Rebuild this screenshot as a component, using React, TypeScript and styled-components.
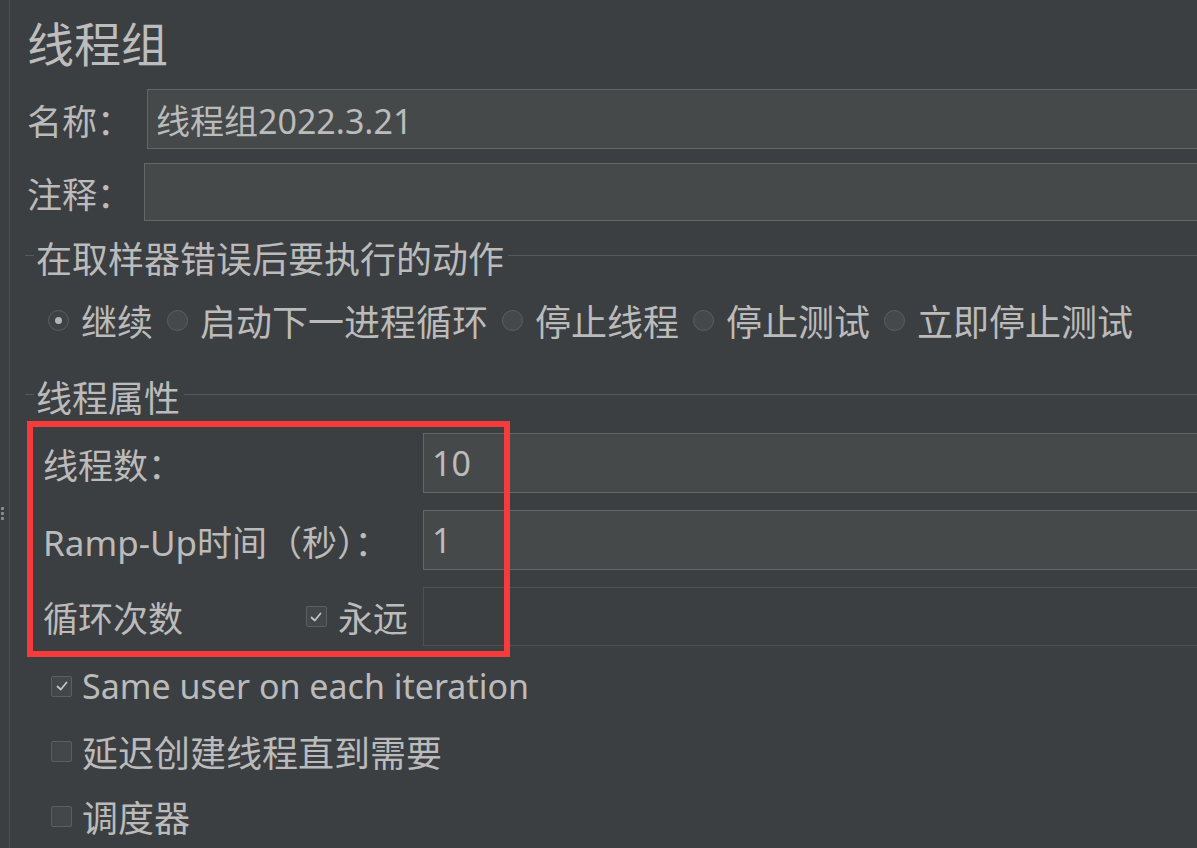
import React from "react";
import styled, { createGlobalStyle } from "styled-components";

const GlobalStyle = createGlobalStyle`
  html, body {
    margin: 0;
    padding: 0;
    background: #3c3f41;
    overflow: hidden;
  }
  body {
    font-family: "Noto Sans", "Noto Sans CJK SC", sans-serif;
    color: #bbbbbb;
  }
`;

const Root = styled.div`
  display: flex;
  width: 100vw;
  height: 100vh;
  overflow: hidden;
`;

const Splitter = styled.div`
  width: 9px;
  flex: none;
  display: flex;
  flex-direction: column;
  align-items: flex-start;
  justify-content: center;
  gap: 2px;
  padding-top: 178px;
  box-sizing: border-box;
`;

const Dot = styled.span`
  width: 3px;
  height: 3px;
  margin-left: 1px;
  border-radius: 1px;
  background: #8c8e90;
`;

const Panel = styled.div`
  flex: 1;
  border-left: 1px solid #4d5052;
  padding-left: 17px;
  display: flex;
  flex-direction: column;
  min-width: 0;
`;

const Title = styled.div`
  height: 89px;
  line-height: 89px;
  font-size: 47px;
  color: #bdbdbd;
`;

const FieldRow = styled.div<{ $gap?: number }>`
  display: flex;
  align-items: center;
  margin-top: ${(p) => p.$gap ?? 0}px;
  margin-right: -12px;
`;

const Label = styled.div<{ $width: number }>`
  width: ${(p) => p.$width}px;
  flex: none;
  font-size: 35px;
  white-space: nowrap;
`;

const TextBox = styled.div<{ $height: number; $disabled?: boolean }>`
  flex: 1;
  height: ${(p) => p.$height}px;
  box-sizing: border-box;
  border: 1px solid ${(p) => (p.$disabled ? "#4e5153" : "#646668")};
  background: ${(p) => (p.$disabled ? "transparent" : "#45494a")};
  display: flex;
  align-items: center;
  padding-left: 8px;
  font-size: 34px;
  color: #bbbbbb;
  white-space: nowrap;
`;

const SectionHeader = styled.div<{ $gap: number }>`
  display: flex;
  align-items: center;
  height: 44px;
  margin-top: ${(p) => p.$gap}px;
  margin-left: -2px;
`;

const Rule = styled.div<{ $grow?: boolean }>`
  height: 1px;
  background: #56595b;
  margin-top: -4px;
  ${(p) => (p.$grow ? "flex: 1;" : "width: 9px; flex: none;")}
`;

const SectionText = styled.span`
  font-size: 36px;
  padding: 0 4px 0 2px;
  white-space: nowrap;
`;

const RadioRow = styled.div`
  display: flex;
  align-items: center;
  height: 44px;
  margin-top: 19px;
  padding-left: 21px;
  gap: 14px;
`;

const Option = styled.label`
  display: flex;
  align-items: center;
  gap: 12px;
  font-size: 36px;
  white-space: nowrap;
`;

const RadioCircle = styled.span<{ $checked?: boolean }>`
  width: 21px;
  height: 21px;
  box-sizing: border-box;
  border-radius: 50%;
  border: 1.5px solid #5d6062;
  background: ${(p) => (p.$checked ? "#3f4244" : "#45494b")};
  display: flex;
  align-items: center;
  justify-content: center;
  flex: none;
  &::after {
    content: "";
    display: ${(p) => (p.$checked ? "block" : "none")};
    width: 7px;
    height: 7px;
    border-radius: 50%;
    background: #b4b4b4;
  }
`;

const ThreadGroupBox = styled.div`
  position: relative;
  margin-top: 15px;
  display: flex;
  flex-direction: column;
  gap: 17px;
  padding-left: 16px;
`;

const Highlight = styled.div`
  position: absolute;
  left: 0;
  top: -12px;
  width: 483px;
  height: 236px;
  box-sizing: border-box;
  border: 6px solid #f53b3b;
  pointer-events: none;
`;

const PropRow = styled.div`
  display: flex;
  align-items: center;
  margin-right: -12px;
`;

const PropLabel = styled.div`
  width: 380px;
  flex: none;
  display: flex;
  align-items: center;
  font-size: 35px;
  white-space: nowrap;
`;

const Forever = styled.span`
  margin-left: auto;
  margin-right: 15px;
  display: flex;
  align-items: center;
  gap: 11px;
`;

const CheckBox = styled.span`
  width: 21px;
  height: 21px;
  box-sizing: border-box;
  border: 1.5px solid #5c5f61;
  border-radius: 2px;
  background: #43474a;
  display: flex;
  align-items: center;
  justify-content: center;
  flex: none;
`;

const CheckRow = styled.div<{ $gap: number; $latin?: boolean }>`
  display: flex;
  align-items: center;
  height: 44px;
  margin-top: ${(p) => p.$gap}px;
  padding-left: 24px;
  gap: 10px;
  font-size: ${(p) => (p.$latin ? 34 : 36)}px;
  white-space: nowrap;
`;

const Tick = () => (
  <svg width="14" height="14" viewBox="0 0 14 14">
    <polyline
      points="2.5,7.5 5.8,10.5 11.5,3.5"
      fill="none"
      stroke="#c2c2c2"
      strokeWidth="1.8"
      strokeLinecap="round"
      strokeLinejoin="round"
    />
  </svg>
);

const Check = ({ checked }: { checked?: boolean }) => (
  <CheckBox>{checked ? <Tick /> : null}</CheckBox>
);

const options = [
  { label: "继续", checked: true },
  { label: "启动下一进程循环" },
  { label: "停止线程" },
  { label: "停止测试" },
  { label: "立即停止测试" },
];

export default function App() {
  return (
    <>
      <GlobalStyle />
      <Root>
        <Splitter>
          <Dot />
          <Dot />
          <Dot />
        </Splitter>
        <Panel>
          <Title>线程组</Title>
          <FieldRow>
            <Label $width={120}>名称：</Label>
            <TextBox $height={60}>线程组2022.3.21</TextBox>
          </FieldRow>
          <FieldRow $gap={14}>
            <Label $width={117}>注释：</Label>
            <TextBox $height={58} />
          </FieldRow>

          <SectionHeader $gap={14}>
            <Rule />
            <SectionText>在取样器错误后要执行的动作</SectionText>
            <Rule $grow />
          </SectionHeader>
          <RadioRow>
            {options.map((o) => (
              <Option key={o.label}>
                <RadioCircle $checked={o.checked} />
                {o.label}
              </Option>
            ))}
          </RadioRow>

          <SectionHeader $gap={32}>
            <Rule />
            <SectionText>线程属性</SectionText>
            <Rule $grow />
          </SectionHeader>

          <ThreadGroupBox>
            <PropRow>
              <PropLabel>线程数：</PropLabel>
              <TextBox $height={60}>10</TextBox>
            </PropRow>
            <PropRow>
              <PropLabel>Ramp-Up时间（秒）：</PropLabel>
              <TextBox $height={60}>1</TextBox>
            </PropRow>
            <PropRow>
              <PropLabel>
                循环次数
                <Forever>
                  <Check checked />
                  永远
                </Forever>
              </PropLabel>
              <TextBox $height={59} $disabled />
            </PropRow>
            <Highlight />
          </ThreadGroupBox>

          <CheckRow $gap={18} $latin>
            <Check checked />
            Same user on each iteration
          </CheckRow>
          <CheckRow $gap={21}>
            <Check />
            延迟创建线程直到需要
          </CheckRow>
          <CheckRow $gap={21}>
            <Check />
            调度器
          </CheckRow>
        </Panel>
      </Root>
    </>
  );
}
